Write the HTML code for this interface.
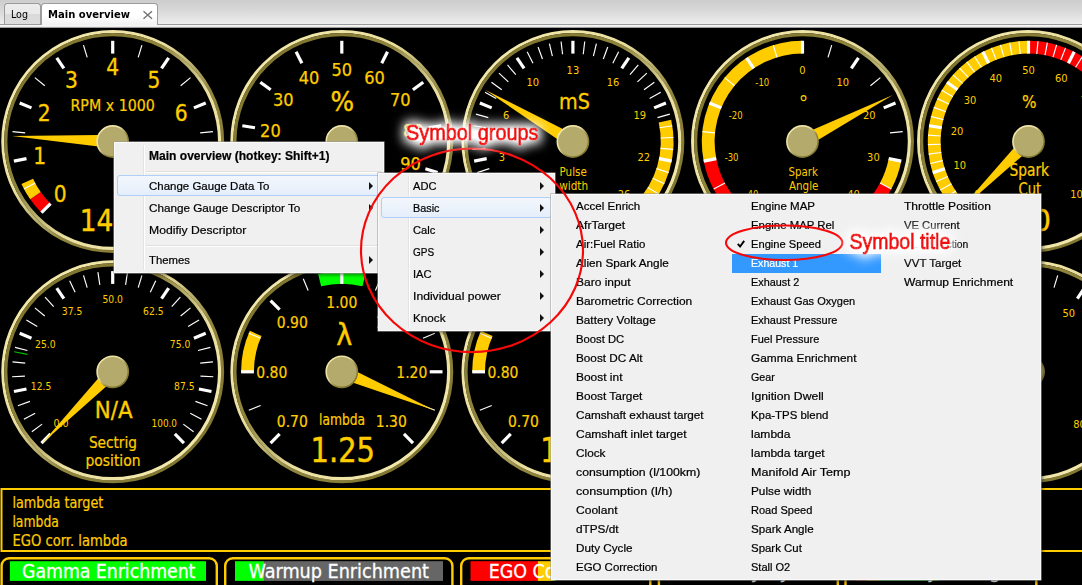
<!DOCTYPE html>
<html><head><meta charset="utf-8"><title>Main overview</title>
<style>
html,body{margin:0;padding:0;background:#000;}
body{width:1082px;height:585px;overflow:hidden;position:relative;font-family:"Liberation Sans",sans-serif;font-size:11.7px;color:#000;}
#tabbar{position:absolute;left:0;top:0;width:1082px;height:27.7px;background:linear-gradient(#cdcdcd 0,#d9d9d9 40%,#ededed 85%,#f4f4f4 100%);}
#tabline{position:absolute;left:0;top:23.6px;width:1082px;height:4.1px;background:linear-gradient(#9a9a9a 0,#9a9a9a 1px,#fbfbfb 1px,#dcdcdc 100%);}
.tab{position:absolute;box-sizing:border-box;border:1px solid #9c9c9c;border-bottom:none;border-radius:3.5px 3.5px 0 0;}
#tlog{left:4.2px;top:3.3px;width:36.6px;height:21.1px;background:linear-gradient(#ececec 0,#e9e9e9 50%,#dadada 50%,#dcdcdc 100%);}
#tmain{left:40.8px;top:3.1px;width:117.4px;height:21.7px;background:linear-gradient(#fff 0,#fff 55%,#f1f1f1 100%);font-weight:bold;}
.tab span{position:absolute;top:3.8px;font-size:11px;white-space:nowrap;transform-origin:0 50%;font-family:"DejaVu Sans Condensed","DejaVu Sans",sans-serif;font-stretch:condensed;}
.menu{position:absolute;box-sizing:border-box;background:#f0f0f0;border:1px solid #fafafa;box-shadow:0 0 0 0.55px #9a9a9a,2.5px 2.5px 3px rgba(0,0,0,.4);}
.gut{position:absolute;top:2px;bottom:2px;width:0;border-left:1px solid #e2e3e3;border-right:1px solid #fff;}
.mi{position:absolute;left:34.3px;height:22px;line-height:22px;white-space:nowrap;transform-origin:0 50%;}
.sep{position:absolute;left:31px;right:2px;height:0;border-top:1px solid #e0e0e0;border-bottom:1px solid #fff;}
.hl{position:absolute;left:2px;right:2px;height:21px;box-sizing:border-box;border:1px solid #aecff7;border-radius:3px;background:linear-gradient(#f3f7fc,#e4eefb);}
.arr{position:absolute;width:0;height:0;border-left:4.8px solid #111;border-top:4px solid transparent;border-bottom:4px solid transparent;margin-top:-0.3px;}
.mi,.mi3{-webkit-text-stroke:0.22px currentColor;}
.mi3{position:absolute;height:19px;line-height:19px;white-space:nowrap;transform-origin:0 50%;}
.hl3{color:#fff;}
</style></head><body>
<div id="tabbar"></div><div id="tabline"></div>
<div class="tab" id="tlog"><span class="t" style="left:6.3px;transform:scaleX(0.9628)">Log</span></div>
<div class="tab" id="tmain"><span class="t" style="left:6.4px;top:3.7px;transform:scaleX(1.0129)">Main overview</span>
<svg style="position:absolute;left:100px;top:5px" width="12" height="12" viewBox="0 0 12 12"><path d="M1.5,2.2 L10,9.8 M10,2.2 L1.5,9.8" stroke="#727272" stroke-width="1.4" fill="none"/></svg></div>
<svg width="1082" height="585" viewBox="0 0 1082 585" style="position:absolute;left:0;top:0;font-stretch:condensed" font-family='"DejaVu Sans Condensed","DejaVu Sans",sans-serif'>
<defs>
<linearGradient id="rgo" x1="0.15" y1="0.15" x2="0.85" y2="0.85"><stop offset="0" stop-color="#F2E8AA"/><stop offset="0.35" stop-color="#EADF9F"/><stop offset="0.5" stop-color="#BDB370"/><stop offset="0.65" stop-color="#8F853D"/><stop offset="1" stop-color="#80762F"/></linearGradient>
<linearGradient id="rgi" x1="0.15" y1="0.15" x2="0.85" y2="0.85"><stop offset="0" stop-color="#80762F"/><stop offset="0.35" stop-color="#8F853D"/><stop offset="0.5" stop-color="#BDB370"/><stop offset="0.65" stop-color="#EADF9F"/><stop offset="1" stop-color="#F2E8AA"/></linearGradient>
</defs>
<rect x="0" y="27.7" width="1082" height="585" fill="#000"/>
<circle cx="112.7" cy="141.5" r="109.95" fill="none" stroke="url(#rgo)" stroke-width="3.0"/>
<circle cx="112.7" cy="141.5" r="106.9" fill="none" stroke="url(#rgi)" stroke-width="3.2"/>
<path d="M41.49,212.71 A100.7,100.7 0 0 1 30.21,199.26 L40.70,191.92 A87.9,87.9 0 0 0 50.55,203.65 Z" fill="#FF0000"/>
<path d="M30.21,199.26 A100.7,100.7 0 0 1 21.43,184.06 L33.04,178.65 A87.9,87.9 0 0 0 40.70,191.92 Z" fill="#FFCC00"/>
<line x1="50.55" y1="203.65" x2="41.49" y2="212.71" stroke="#fff" stroke-width="3.2"/>
<line x1="35.18" y1="182.94" x2="23.89" y2="188.97" stroke="#fff" stroke-width="1.15"/>
<text x="60.2" y="202.3" font-size="22.5" text-anchor="middle" fill="#FFCC00" stroke="#FFCC00" stroke-width="0.32">0</text>
<line x1="26.49" y1="158.65" x2="13.93" y2="161.15" stroke="#fff" stroke-width="3.2"/>
<line x1="25.22" y1="132.88" x2="12.48" y2="131.63" stroke="#fff" stroke-width="1.15"/>
<text x="39.8" y="164.2" font-size="22.5" text-anchor="middle" fill="#FFCC00" stroke="#FFCC00" stroke-width="0.32">1</text>
<line x1="31.49" y1="107.86" x2="19.67" y2="102.96" stroke="#fff" stroke-width="3.2"/>
<line x1="44.75" y1="85.74" x2="34.86" y2="77.62" stroke="#fff" stroke-width="1.15"/>
<text x="44.1" y="121.3" font-size="22.5" text-anchor="middle" fill="#FFCC00" stroke="#FFCC00" stroke-width="0.32">2</text>
<line x1="63.87" y1="68.41" x2="56.75" y2="57.77" stroke="#fff" stroke-width="3.2"/>
<line x1="87.18" y1="57.38" x2="83.47" y2="45.14" stroke="#fff" stroke-width="1.15"/>
<text x="71.4" y="87.9" font-size="22.5" text-anchor="middle" fill="#FFCC00" stroke="#FFCC00" stroke-width="0.32">3</text>
<line x1="112.70" y1="53.60" x2="112.70" y2="40.80" stroke="#fff" stroke-width="3.2"/>
<line x1="138.22" y1="57.38" x2="141.93" y2="45.14" stroke="#fff" stroke-width="1.15"/>
<text x="112.7" y="75.4" font-size="22.5" text-anchor="middle" fill="#FFCC00" stroke="#FFCC00" stroke-width="0.32">4</text>
<line x1="161.53" y1="68.41" x2="168.65" y2="57.77" stroke="#fff" stroke-width="3.2"/>
<line x1="180.65" y1="85.74" x2="190.54" y2="77.62" stroke="#fff" stroke-width="1.15"/>
<text x="154.0" y="87.9" font-size="22.5" text-anchor="middle" fill="#FFCC00" stroke="#FFCC00" stroke-width="0.32">5</text>
<line x1="193.91" y1="107.86" x2="205.73" y2="102.96" stroke="#fff" stroke-width="3.2"/>
<line x1="200.18" y1="132.88" x2="212.92" y2="131.63" stroke="#fff" stroke-width="1.15"/>
<text x="181.3" y="121.3" font-size="22.5" text-anchor="middle" fill="#FFCC00" stroke="#FFCC00" stroke-width="0.32">6</text>
<line x1="198.91" y1="158.65" x2="211.47" y2="161.15" stroke="#fff" stroke-width="3.2"/>
<line x1="190.22" y1="182.94" x2="201.51" y2="188.97" stroke="#fff" stroke-width="1.15"/>
<text x="185.6" y="164.2" font-size="22.5" text-anchor="middle" fill="#FFCC00" stroke="#FFCC00" stroke-width="0.32">7</text>
<line x1="174.85" y1="203.65" x2="183.91" y2="212.71" stroke="#fff" stroke-width="3.2"/>
<text x="165.2" y="202.3" font-size="22.5" text-anchor="middle" fill="#FFCC00" stroke="#FFCC00" stroke-width="0.32">8</text>
<text x="112.7" y="111.2" font-size="16.6" text-anchor="middle" fill="#FFCC00" stroke="#FFCC00" stroke-width="0.23" textLength="84.5" lengthAdjust="spacingAndGlyphs">RPM x 1000</text>
<text x="113.3" y="231.1" font-size="30.3" text-anchor="middle" fill="#FFCC00" stroke="#FFCC00" stroke-width="0.42" textLength="67" lengthAdjust="spacingAndGlyphs">1425</text>
<polygon points="99.03,134.95 12.05,136.05 98.41,146.53" fill="#FFCC00"/>
<circle cx="112.7" cy="141.5" r="15.6" fill="#B3AA6B" stroke="url(#rgo)" stroke-width="1.6"/>
<circle cx="341.8" cy="141.5" r="109.95" fill="none" stroke="url(#rgo)" stroke-width="3.0"/>
<circle cx="341.8" cy="141.5" r="106.9" fill="none" stroke="url(#rgi)" stroke-width="3.2"/>
<line x1="279.65" y1="203.65" x2="270.59" y2="212.71" stroke="#fff" stroke-width="3.2"/>
<text x="290.7" y="199.2" font-size="18" text-anchor="middle" fill="#FFCC00" stroke="#FFCC00" stroke-width="0.25">0</text>
<line x1="258.20" y1="168.66" x2="246.03" y2="172.62" stroke="#fff" stroke-width="3.2"/>
<text x="273.0" y="170.4" font-size="18" text-anchor="middle" fill="#FFCC00" stroke="#FFCC00" stroke-width="0.25">10</text>
<line x1="254.98" y1="127.75" x2="242.34" y2="125.75" stroke="#fff" stroke-width="3.2"/>
<text x="270.4" y="136.8" font-size="18" text-anchor="middle" fill="#FFCC00" stroke="#FFCC00" stroke-width="0.25">20</text>
<line x1="270.69" y1="89.83" x2="260.33" y2="82.31" stroke="#fff" stroke-width="3.2"/>
<text x="283.3" y="105.6" font-size="18" text-anchor="middle" fill="#FFCC00" stroke="#FFCC00" stroke-width="0.25">30</text>
<line x1="301.89" y1="63.18" x2="296.08" y2="51.78" stroke="#fff" stroke-width="3.2"/>
<text x="309.0" y="83.7" font-size="18" text-anchor="middle" fill="#FFCC00" stroke="#FFCC00" stroke-width="0.25">40</text>
<line x1="341.80" y1="53.60" x2="341.80" y2="40.80" stroke="#fff" stroke-width="3.2"/>
<text x="341.8" y="75.8" font-size="18" text-anchor="middle" fill="#FFCC00" stroke="#FFCC00" stroke-width="0.25">50</text>
<line x1="381.71" y1="63.18" x2="387.52" y2="51.78" stroke="#fff" stroke-width="3.2"/>
<text x="374.6" y="83.7" font-size="18" text-anchor="middle" fill="#FFCC00" stroke="#FFCC00" stroke-width="0.25">60</text>
<line x1="412.91" y1="89.83" x2="423.27" y2="82.31" stroke="#fff" stroke-width="3.2"/>
<text x="400.3" y="105.6" font-size="18" text-anchor="middle" fill="#FFCC00" stroke="#FFCC00" stroke-width="0.25">70</text>
<line x1="428.62" y1="127.75" x2="441.26" y2="125.75" stroke="#fff" stroke-width="3.2"/>
<text x="413.2" y="136.8" font-size="18" text-anchor="middle" fill="#FFCC00" stroke="#FFCC00" stroke-width="0.25">80</text>
<line x1="425.40" y1="168.66" x2="437.57" y2="172.62" stroke="#fff" stroke-width="3.2"/>
<text x="410.6" y="170.4" font-size="18" text-anchor="middle" fill="#FFCC00" stroke="#FFCC00" stroke-width="0.25">90</text>
<line x1="403.95" y1="203.65" x2="413.01" y2="212.71" stroke="#fff" stroke-width="3.2"/>
<text x="392.9" y="199.2" font-size="18" text-anchor="middle" fill="#FFCC00" stroke="#FFCC00" stroke-width="0.25">100</text>
<text x="342.3" y="110.7" font-size="26.5" text-anchor="middle" fill="#FFCC00" stroke="#FFCC00" stroke-width="0.37" textLength="23.6" lengthAdjust="spacingAndGlyphs">%</text>
<circle cx="341.8" cy="141.5" r="15.6" fill="#B3AA6B" stroke="url(#rgo)" stroke-width="1.6"/>
<circle cx="572.9" cy="141.5" r="109.95" fill="none" stroke="url(#rgo)" stroke-width="3.0"/>
<circle cx="572.9" cy="141.5" r="106.9" fill="none" stroke="url(#rgi)" stroke-width="3.2"/>
<path d="M671.21,119.70 A100.7,100.7 0 0 1 644.11,212.71 L635.05,203.65 A87.9,87.9 0 0 0 658.72,122.47 Z" fill="#FFCC00"/>
<line x1="510.75" y1="203.65" x2="501.69" y2="212.71" stroke="#fff" stroke-width="3.2"/>
<line x1="503.87" y1="195.92" x2="493.82" y2="203.84" stroke="#fff" stroke-width="1.15"/>
<line x1="497.95" y1="187.43" x2="487.04" y2="194.12" stroke="#fff" stroke-width="1.15"/>
<line x1="493.07" y1="178.30" x2="481.45" y2="183.66" stroke="#fff" stroke-width="1.15"/>
<line x1="489.30" y1="168.66" x2="477.13" y2="172.62" stroke="#fff" stroke-width="1.15"/>
<text x="521.8" y="197.5" font-size="11" text-anchor="middle" fill="#FFCC00" stroke="#FFCC00" stroke-width="0.00">0</text>
<line x1="486.69" y1="158.65" x2="474.13" y2="161.15" stroke="#fff" stroke-width="3.2"/>
<line x1="485.27" y1="148.40" x2="472.51" y2="149.40" stroke="#fff" stroke-width="1.15"/>
<line x1="485.07" y1="138.05" x2="472.28" y2="137.55" stroke="#fff" stroke-width="1.15"/>
<line x1="486.08" y1="127.75" x2="473.44" y2="125.75" stroke="#fff" stroke-width="1.15"/>
<line x1="488.30" y1="117.64" x2="475.98" y2="114.17" stroke="#fff" stroke-width="1.15"/>
<text x="502.0" y="160.5" font-size="11" text-anchor="middle" fill="#FFCC00" stroke="#FFCC00" stroke-width="0.00">3</text>
<line x1="491.69" y1="107.86" x2="479.87" y2="102.96" stroke="#fff" stroke-width="3.2"/>
<line x1="496.21" y1="98.55" x2="485.04" y2="92.30" stroke="#fff" stroke-width="1.15"/>
<line x1="501.79" y1="89.83" x2="491.43" y2="82.31" stroke="#fff" stroke-width="1.15"/>
<line x1="508.35" y1="81.83" x2="498.95" y2="73.14" stroke="#fff" stroke-width="1.15"/>
<line x1="515.81" y1="74.66" x2="507.50" y2="64.93" stroke="#fff" stroke-width="1.15"/>
<text x="506.1" y="118.7" font-size="11" text-anchor="middle" fill="#FFCC00" stroke="#FFCC00" stroke-width="0.00">6</text>
<line x1="524.07" y1="68.41" x2="516.95" y2="57.77" stroke="#fff" stroke-width="3.2"/>
<line x1="532.99" y1="63.18" x2="527.18" y2="51.78" stroke="#fff" stroke-width="1.15"/>
<line x1="542.48" y1="59.03" x2="538.05" y2="47.02" stroke="#fff" stroke-width="1.15"/>
<line x1="552.38" y1="56.03" x2="549.39" y2="43.58" stroke="#fff" stroke-width="1.15"/>
<line x1="562.57" y1="54.21" x2="561.06" y2="41.50" stroke="#fff" stroke-width="1.15"/>
<text x="532.7" y="86.3" font-size="11" text-anchor="middle" fill="#FFCC00" stroke="#FFCC00" stroke-width="0.00">10</text>
<line x1="572.90" y1="53.60" x2="572.90" y2="40.80" stroke="#fff" stroke-width="3.2"/>
<line x1="583.23" y1="54.21" x2="584.74" y2="41.50" stroke="#fff" stroke-width="1.15"/>
<line x1="593.42" y1="56.03" x2="596.41" y2="43.58" stroke="#fff" stroke-width="1.15"/>
<line x1="603.32" y1="59.03" x2="607.75" y2="47.02" stroke="#fff" stroke-width="1.15"/>
<line x1="612.81" y1="63.18" x2="618.62" y2="51.78" stroke="#fff" stroke-width="1.15"/>
<text x="572.9" y="74.1" font-size="11" text-anchor="middle" fill="#FFCC00" stroke="#FFCC00" stroke-width="0.00">13</text>
<line x1="621.73" y1="68.41" x2="628.85" y2="57.77" stroke="#fff" stroke-width="3.2"/>
<line x1="629.99" y1="74.66" x2="638.30" y2="64.93" stroke="#fff" stroke-width="1.15"/>
<line x1="637.45" y1="81.83" x2="646.85" y2="73.14" stroke="#fff" stroke-width="1.15"/>
<line x1="644.01" y1="89.83" x2="654.37" y2="82.31" stroke="#fff" stroke-width="1.15"/>
<line x1="649.59" y1="98.55" x2="660.76" y2="92.30" stroke="#fff" stroke-width="1.15"/>
<text x="613.1" y="86.3" font-size="11" text-anchor="middle" fill="#FFCC00" stroke="#FFCC00" stroke-width="0.00">16</text>
<line x1="654.11" y1="107.86" x2="665.93" y2="102.96" stroke="#fff" stroke-width="3.2"/>
<line x1="657.50" y1="117.64" x2="669.82" y2="114.17" stroke="#fff" stroke-width="1.15"/>
<line x1="659.72" y1="127.75" x2="672.36" y2="125.75" stroke="#fff" stroke-width="1.15"/>
<line x1="660.73" y1="138.05" x2="673.52" y2="137.55" stroke="#fff" stroke-width="1.15"/>
<line x1="660.53" y1="148.40" x2="673.29" y2="149.40" stroke="#fff" stroke-width="1.15"/>
<text x="639.7" y="118.7" font-size="11" text-anchor="middle" fill="#FFCC00" stroke="#FFCC00" stroke-width="0.00">19</text>
<line x1="659.11" y1="158.65" x2="671.67" y2="161.15" stroke="#fff" stroke-width="3.2"/>
<line x1="656.50" y1="168.66" x2="668.67" y2="172.62" stroke="#fff" stroke-width="1.15"/>
<line x1="652.73" y1="178.30" x2="664.35" y2="183.66" stroke="#fff" stroke-width="1.15"/>
<line x1="647.85" y1="187.43" x2="658.76" y2="194.12" stroke="#fff" stroke-width="1.15"/>
<line x1="641.93" y1="195.92" x2="651.98" y2="203.84" stroke="#fff" stroke-width="1.15"/>
<text x="643.8" y="160.5" font-size="11" text-anchor="middle" fill="#FFCC00" stroke="#FFCC00" stroke-width="0.00">22</text>
<line x1="635.05" y1="203.65" x2="644.11" y2="212.71" stroke="#fff" stroke-width="3.2"/>
<text x="624.0" y="197.5" font-size="11" text-anchor="middle" fill="#FFCC00" stroke="#FFCC00" stroke-width="0.00">26</text>
<text x="574.4" y="108.8" font-size="21.3" text-anchor="middle" fill="#FFCC00" stroke="#FFCC00" stroke-width="0.30">mS</text>
<text x="573.2" y="176.2" font-size="12.8" text-anchor="middle" fill="#FFCC00" stroke="#FFCC00" stroke-width="0.00" textLength="27.3" lengthAdjust="spacingAndGlyphs">Pulse</text>
<text x="573.7" y="190.2" font-size="12.8" text-anchor="middle" fill="#FFCC00" stroke="#FFCC00" stroke-width="0.00" textLength="28.8" lengthAdjust="spacingAndGlyphs">width</text>
<polygon points="563.78,129.40 485.01,89.73 557.89,139.39" fill="#FFCC00"/>
<circle cx="572.9" cy="141.5" r="15.6" fill="#B3AA6B" stroke="url(#rgo)" stroke-width="1.6"/>
<circle cx="802.5" cy="141.5" r="109.95" fill="none" stroke="url(#rgo)" stroke-width="3.0"/>
<circle cx="802.5" cy="141.5" r="106.9" fill="none" stroke="url(#rgi)" stroke-width="3.2"/>
<path d="M731.29,212.71 A100.7,100.7 0 0 1 703.73,161.15 L716.29,158.65 A87.9,87.9 0 0 0 740.35,203.65 Z" fill="#FF0000"/>
<path d="M703.73,161.15 A100.7,100.7 0 0 1 802.50,40.80 L802.50,53.60 A87.9,87.9 0 0 0 716.29,158.65 Z" fill="#FFCC00"/>
<path d="M901.27,161.15 A100.7,100.7 0 0 1 891.33,188.93 L880.04,182.90 A87.9,87.9 0 0 0 888.71,158.65 Z" fill="#FFCC00"/>
<path d="M891.33,188.93 A100.7,100.7 0 0 1 873.71,212.71 L864.65,203.65 A87.9,87.9 0 0 0 880.04,182.90 Z" fill="#FF0000"/>
<line x1="740.35" y1="203.65" x2="731.29" y2="212.71" stroke="#fff" stroke-width="3.2"/>
<line x1="724.98" y1="182.94" x2="713.69" y2="188.97" stroke="#fff" stroke-width="1.15"/>
<text x="751.4" y="197.5" font-size="11" text-anchor="middle" fill="#FFCC00" stroke="#FFCC00" stroke-width="0.00" textLength="13.9" lengthAdjust="spacingAndGlyphs">-40</text>
<line x1="716.29" y1="158.65" x2="703.73" y2="161.15" stroke="#fff" stroke-width="3.2"/>
<line x1="715.02" y1="132.88" x2="702.28" y2="131.63" stroke="#fff" stroke-width="1.15"/>
<text x="731.6" y="160.5" font-size="11" text-anchor="middle" fill="#FFCC00" stroke="#FFCC00" stroke-width="0.00" textLength="13.9" lengthAdjust="spacingAndGlyphs">-30</text>
<line x1="721.29" y1="107.86" x2="709.47" y2="102.96" stroke="#fff" stroke-width="3.2"/>
<line x1="734.55" y1="85.74" x2="724.66" y2="77.62" stroke="#fff" stroke-width="1.15"/>
<text x="735.7" y="118.7" font-size="11" text-anchor="middle" fill="#FFCC00" stroke="#FFCC00" stroke-width="0.00" textLength="13.9" lengthAdjust="spacingAndGlyphs">-20</text>
<line x1="753.67" y1="68.41" x2="746.55" y2="57.77" stroke="#fff" stroke-width="3.2"/>
<line x1="776.98" y1="57.38" x2="773.27" y2="45.14" stroke="#fff" stroke-width="1.15"/>
<text x="762.3" y="86.3" font-size="11" text-anchor="middle" fill="#FFCC00" stroke="#FFCC00" stroke-width="0.00" textLength="13.9" lengthAdjust="spacingAndGlyphs">-10</text>
<line x1="802.50" y1="53.60" x2="802.50" y2="40.80" stroke="#fff" stroke-width="3.2"/>
<line x1="828.02" y1="57.38" x2="831.73" y2="45.14" stroke="#fff" stroke-width="1.15"/>
<text x="802.5" y="74.1" font-size="11" text-anchor="middle" fill="#FFCC00" stroke="#FFCC00" stroke-width="0.00">0</text>
<line x1="851.33" y1="68.41" x2="858.45" y2="57.77" stroke="#fff" stroke-width="3.2"/>
<line x1="870.45" y1="85.74" x2="880.34" y2="77.62" stroke="#fff" stroke-width="1.15"/>
<text x="842.7" y="86.3" font-size="11" text-anchor="middle" fill="#FFCC00" stroke="#FFCC00" stroke-width="0.00">10</text>
<line x1="883.71" y1="107.86" x2="895.53" y2="102.96" stroke="#fff" stroke-width="3.2"/>
<line x1="889.98" y1="132.88" x2="902.72" y2="131.63" stroke="#fff" stroke-width="1.15"/>
<text x="869.3" y="118.7" font-size="11" text-anchor="middle" fill="#FFCC00" stroke="#FFCC00" stroke-width="0.00">20</text>
<line x1="888.71" y1="158.65" x2="901.27" y2="161.15" stroke="#fff" stroke-width="3.2"/>
<line x1="880.02" y1="182.94" x2="891.31" y2="188.97" stroke="#fff" stroke-width="1.15"/>
<text x="873.4" y="160.5" font-size="11" text-anchor="middle" fill="#FFCC00" stroke="#FFCC00" stroke-width="0.00">30</text>
<line x1="864.65" y1="203.65" x2="873.71" y2="212.71" stroke="#fff" stroke-width="3.2"/>
<text x="853.6" y="197.5" font-size="11" text-anchor="middle" fill="#FFCC00" stroke="#FFCC00" stroke-width="0.00">40</text>
<text x="803.5" y="110.5" font-size="21" text-anchor="middle" fill="#FFCC00" stroke="#FFCC00" stroke-width="0">°</text>
<text x="803.3" y="176.4" font-size="12.8" text-anchor="middle" fill="#FFCC00" stroke="#FFCC00" stroke-width="0.00" textLength="29.4" lengthAdjust="spacingAndGlyphs">Spark</text>
<text x="803.7" y="190.4" font-size="12.8" text-anchor="middle" fill="#FFCC00" stroke="#FFCC00" stroke-width="0.00" textLength="29.4" lengthAdjust="spacingAndGlyphs">Angle</text>
<polygon points="817.60,140.26 892.86,95.06 812.30,129.94" fill="#FFCC00"/>
<circle cx="802.5" cy="141.5" r="15.6" fill="#B3AA6B" stroke="url(#rgo)" stroke-width="1.6"/>
<circle cx="1028.5" cy="141.5" r="109.95" fill="none" stroke="url(#rgo)" stroke-width="3.0"/>
<circle cx="1028.5" cy="141.5" r="106.9" fill="none" stroke="url(#rgi)" stroke-width="3.2"/>
<path d="M957.29,212.71 A100.7,100.7 0 0 1 1028.50,40.80 L1028.50,53.60 A87.9,87.9 0 0 0 966.35,203.65 Z" fill="#FFCC00"/>
<path d="M1028.50,40.80 A100.7,100.7 0 0 1 1099.71,212.71 L1090.65,203.65 A87.9,87.9 0 0 0 1028.50,53.60 Z" fill="#FF0000"/>
<line x1="966.35" y1="203.65" x2="957.29" y2="212.71" stroke="#fff" stroke-width="3.2"/>
<line x1="960.77" y1="197.53" x2="950.91" y2="205.69" stroke="#fff" stroke-width="1.15"/>
<line x1="955.80" y1="190.91" x2="945.21" y2="198.10" stroke="#fff" stroke-width="1.15"/>
<line x1="951.47" y1="183.85" x2="940.26" y2="190.01" stroke="#fff" stroke-width="1.15"/>
<line x1="947.83" y1="176.41" x2="936.08" y2="181.49" stroke="#fff" stroke-width="1.15"/>
<text x="977.4" y="197.5" font-size="11" text-anchor="middle" fill="#FFCC00" stroke="#FFCC00" stroke-width="0.00">0</text>
<line x1="944.90" y1="168.66" x2="932.73" y2="172.62" stroke="#fff" stroke-width="3.2"/>
<line x1="942.72" y1="160.67" x2="930.23" y2="163.47" stroke="#fff" stroke-width="1.15"/>
<line x1="941.29" y1="152.52" x2="928.59" y2="154.12" stroke="#fff" stroke-width="1.15"/>
<line x1="940.64" y1="144.26" x2="927.85" y2="144.66" stroke="#fff" stroke-width="1.15"/>
<line x1="940.77" y1="135.98" x2="928.00" y2="135.18" stroke="#fff" stroke-width="1.15"/>
<text x="959.7" y="168.8" font-size="11" text-anchor="middle" fill="#FFCC00" stroke="#FFCC00" stroke-width="0.00">10</text>
<line x1="941.68" y1="127.75" x2="929.04" y2="125.75" stroke="#fff" stroke-width="3.2"/>
<line x1="943.36" y1="119.64" x2="930.96" y2="116.46" stroke="#fff" stroke-width="1.15"/>
<line x1="945.80" y1="111.72" x2="933.75" y2="107.39" stroke="#fff" stroke-width="1.15"/>
<line x1="948.97" y1="104.07" x2="937.38" y2="98.62" stroke="#fff" stroke-width="1.15"/>
<line x1="952.84" y1="96.76" x2="941.82" y2="90.24" stroke="#fff" stroke-width="1.15"/>
<text x="957.1" y="135.1" font-size="11" text-anchor="middle" fill="#FFCC00" stroke="#FFCC00" stroke-width="0.00">20</text>
<line x1="957.39" y1="89.83" x2="947.03" y2="82.31" stroke="#fff" stroke-width="3.2"/>
<line x1="962.57" y1="83.37" x2="952.96" y2="74.91" stroke="#fff" stroke-width="1.15"/>
<line x1="968.33" y1="77.42" x2="959.57" y2="68.09" stroke="#fff" stroke-width="1.15"/>
<line x1="974.63" y1="72.05" x2="966.78" y2="61.93" stroke="#fff" stroke-width="1.15"/>
<line x1="981.40" y1="67.28" x2="974.54" y2="56.48" stroke="#fff" stroke-width="1.15"/>
<text x="970.0" y="103.9" font-size="11" text-anchor="middle" fill="#FFCC00" stroke="#FFCC00" stroke-width="0.00">30</text>
<line x1="988.59" y1="63.18" x2="982.78" y2="51.78" stroke="#fff" stroke-width="3.2"/>
<line x1="996.14" y1="59.77" x2="991.43" y2="47.87" stroke="#fff" stroke-width="1.15"/>
<line x1="1003.98" y1="57.09" x2="1000.41" y2="44.80" stroke="#fff" stroke-width="1.15"/>
<line x1="1012.03" y1="55.16" x2="1009.63" y2="42.58" stroke="#fff" stroke-width="1.15"/>
<line x1="1020.23" y1="53.99" x2="1019.02" y2="41.25" stroke="#fff" stroke-width="1.15"/>
<text x="995.7" y="82.0" font-size="11" text-anchor="middle" fill="#FFCC00" stroke="#FFCC00" stroke-width="0.00">40</text>
<line x1="1028.50" y1="53.60" x2="1028.50" y2="40.80" stroke="#fff" stroke-width="3.2"/>
<line x1="1036.77" y1="53.99" x2="1037.98" y2="41.25" stroke="#fff" stroke-width="1.15"/>
<line x1="1044.97" y1="55.16" x2="1047.37" y2="42.58" stroke="#fff" stroke-width="1.15"/>
<line x1="1053.02" y1="57.09" x2="1056.59" y2="44.80" stroke="#fff" stroke-width="1.15"/>
<line x1="1060.86" y1="59.77" x2="1065.57" y2="47.87" stroke="#fff" stroke-width="1.15"/>
<text x="1028.5" y="74.1" font-size="11" text-anchor="middle" fill="#FFCC00" stroke="#FFCC00" stroke-width="0.00">50</text>
<line x1="1068.41" y1="63.18" x2="1074.22" y2="51.78" stroke="#fff" stroke-width="3.2"/>
<line x1="1075.60" y1="67.28" x2="1082.46" y2="56.48" stroke="#fff" stroke-width="1.15"/>
<line x1="1082.37" y1="72.05" x2="1090.22" y2="61.93" stroke="#fff" stroke-width="1.15"/>
<line x1="1088.67" y1="77.42" x2="1097.43" y2="68.09" stroke="#fff" stroke-width="1.15"/>
<line x1="1094.43" y1="83.37" x2="1104.04" y2="74.91" stroke="#fff" stroke-width="1.15"/>
<text x="1061.3" y="82.0" font-size="11" text-anchor="middle" fill="#FFCC00" stroke="#FFCC00" stroke-width="0.00">60</text>
<line x1="1099.61" y1="89.83" x2="1109.97" y2="82.31" stroke="#fff" stroke-width="3.2"/>
<line x1="1104.16" y1="96.76" x2="1115.18" y2="90.24" stroke="#fff" stroke-width="1.15"/>
<line x1="1108.03" y1="104.07" x2="1119.62" y2="98.62" stroke="#fff" stroke-width="1.15"/>
<line x1="1111.20" y1="111.72" x2="1123.25" y2="107.39" stroke="#fff" stroke-width="1.15"/>
<line x1="1113.64" y1="119.64" x2="1126.04" y2="116.46" stroke="#fff" stroke-width="1.15"/>
<text x="1087.0" y="103.9" font-size="11" text-anchor="middle" fill="#FFCC00" stroke="#FFCC00" stroke-width="0.00">70</text>
<line x1="1115.32" y1="127.75" x2="1127.96" y2="125.75" stroke="#fff" stroke-width="3.2"/>
<line x1="1116.23" y1="135.98" x2="1129.00" y2="135.18" stroke="#fff" stroke-width="1.15"/>
<line x1="1116.36" y1="144.26" x2="1129.15" y2="144.66" stroke="#fff" stroke-width="1.15"/>
<line x1="1115.71" y1="152.52" x2="1128.41" y2="154.12" stroke="#fff" stroke-width="1.15"/>
<line x1="1114.28" y1="160.67" x2="1126.77" y2="163.47" stroke="#fff" stroke-width="1.15"/>
<text x="1099.9" y="135.1" font-size="11" text-anchor="middle" fill="#FFCC00" stroke="#FFCC00" stroke-width="0.00">80</text>
<line x1="1112.10" y1="168.66" x2="1124.27" y2="172.62" stroke="#fff" stroke-width="3.2"/>
<line x1="1109.17" y1="176.41" x2="1120.92" y2="181.49" stroke="#fff" stroke-width="1.15"/>
<line x1="1105.53" y1="183.85" x2="1116.74" y2="190.01" stroke="#fff" stroke-width="1.15"/>
<line x1="1101.20" y1="190.91" x2="1111.79" y2="198.10" stroke="#fff" stroke-width="1.15"/>
<line x1="1096.23" y1="197.53" x2="1106.09" y2="205.69" stroke="#fff" stroke-width="1.15"/>
<text x="1097.3" y="168.8" font-size="11" text-anchor="middle" fill="#FFCC00" stroke="#FFCC00" stroke-width="0.00">90</text>
<line x1="1090.65" y1="203.65" x2="1099.71" y2="212.71" stroke="#fff" stroke-width="3.2"/>
<text x="1079.6" y="197.5" font-size="11" text-anchor="middle" fill="#FFCC00" stroke="#FFCC00" stroke-width="0.00">100</text>
<text x="1029.3" y="107.9" font-size="17" text-anchor="middle" fill="#FFCC00" stroke="#FFCC00" stroke-width="0.24">%</text>
<text x="1029.3" y="175.7" font-size="17.2" text-anchor="middle" fill="#FFCC00" stroke="#FFCC00" stroke-width="0.24" textLength="39.6" lengthAdjust="spacingAndGlyphs">Spark</text>
<text x="1029.8" y="194.5" font-size="17.2" text-anchor="middle" fill="#FFCC00" stroke="#FFCC00" stroke-width="0.24" textLength="22.6" lengthAdjust="spacingAndGlyphs">Cut</text>
<text x="1028.9" y="231.1" font-size="30.3" text-anchor="middle" fill="#FFCC00" stroke="#FFCC00" stroke-width="0.42" textLength="44" lengthAdjust="spacingAndGlyphs">0.0</text>
<polygon points="1014.50,147.30 957.22,212.78 1022.70,155.50" fill="#FFCC00"/>
<circle cx="1028.5" cy="141.5" r="15.6" fill="#B3AA6B" stroke="url(#rgo)" stroke-width="1.6"/>
<circle cx="112.7" cy="371.8" r="109.95" fill="none" stroke="url(#rgo)" stroke-width="3.0"/>
<circle cx="112.7" cy="371.8" r="106.9" fill="none" stroke="url(#rgi)" stroke-width="3.2"/>
<line x1="50.55" y1="433.95" x2="41.49" y2="443.01" stroke="#fff" stroke-width="3.2"/>
<line x1="42.10" y1="424.16" x2="31.82" y2="431.79" stroke="#fff" stroke-width="1.15"/>
<line x1="35.18" y1="413.24" x2="23.89" y2="419.27" stroke="#fff" stroke-width="1.15"/>
<line x1="29.94" y1="401.41" x2="17.89" y2="405.72" stroke="#fff" stroke-width="1.15"/>
<text x="61.1" y="427.3" font-size="10.7" text-anchor="middle" fill="#FFCC00" stroke="#FFCC00" stroke-width="0.00">0.0</text>
<line x1="26.49" y1="388.95" x2="13.93" y2="391.45" stroke="#fff" stroke-width="3.2"/>
<line x1="24.91" y1="376.11" x2="12.12" y2="376.74" stroke="#fff" stroke-width="1.15"/>
<line x1="25.22" y1="363.18" x2="12.48" y2="361.93" stroke="#fff" stroke-width="1.15"/>
<line x1="27.43" y1="350.44" x2="15.02" y2="347.33" stroke="#fff" stroke-width="1.15"/>
<text x="41.1" y="389.9" font-size="10.7" text-anchor="middle" fill="#FFCC00" stroke="#FFCC00" stroke-width="0.00" textLength="20.5" lengthAdjust="spacingAndGlyphs">12.5</text>
<line x1="31.49" y1="338.16" x2="19.67" y2="333.26" stroke="#fff" stroke-width="3.2"/>
<line x1="37.31" y1="326.61" x2="26.33" y2="320.03" stroke="#fff" stroke-width="1.15"/>
<line x1="44.75" y1="316.04" x2="34.86" y2="307.92" stroke="#fff" stroke-width="1.15"/>
<line x1="53.67" y1="306.67" x2="45.07" y2="297.19" stroke="#fff" stroke-width="1.15"/>
<text x="45.3" y="347.8" font-size="10.7" text-anchor="middle" fill="#FFCC00" stroke="#FFCC00" stroke-width="0.00" textLength="20.5" lengthAdjust="spacingAndGlyphs">25.0</text>
<line x1="63.87" y1="298.71" x2="56.75" y2="288.07" stroke="#fff" stroke-width="3.2"/>
<line x1="75.12" y1="292.34" x2="69.65" y2="280.77" stroke="#fff" stroke-width="1.15"/>
<line x1="87.18" y1="287.68" x2="83.47" y2="275.44" stroke="#fff" stroke-width="1.15"/>
<line x1="99.80" y1="284.85" x2="97.92" y2="272.19" stroke="#fff" stroke-width="1.15"/>
<text x="72.1" y="315.0" font-size="10.7" text-anchor="middle" fill="#FFCC00" stroke="#FFCC00" stroke-width="0.00" textLength="20.5" lengthAdjust="spacingAndGlyphs">37.5</text>
<line x1="112.70" y1="283.90" x2="112.70" y2="271.10" stroke="#fff" stroke-width="3.2"/>
<line x1="125.60" y1="284.85" x2="127.48" y2="272.19" stroke="#fff" stroke-width="1.15"/>
<line x1="138.22" y1="287.68" x2="141.93" y2="275.44" stroke="#fff" stroke-width="1.15"/>
<line x1="150.28" y1="292.34" x2="155.75" y2="280.77" stroke="#fff" stroke-width="1.15"/>
<text x="112.7" y="302.7" font-size="10.7" text-anchor="middle" fill="#FFCC00" stroke="#FFCC00" stroke-width="0.00" textLength="20.5" lengthAdjust="spacingAndGlyphs">50.0</text>
<line x1="161.53" y1="298.71" x2="168.65" y2="288.07" stroke="#fff" stroke-width="3.2"/>
<line x1="171.73" y1="306.67" x2="180.33" y2="297.19" stroke="#fff" stroke-width="1.15"/>
<line x1="180.65" y1="316.04" x2="190.54" y2="307.92" stroke="#fff" stroke-width="1.15"/>
<line x1="188.09" y1="326.61" x2="199.07" y2="320.03" stroke="#fff" stroke-width="1.15"/>
<text x="153.3" y="315.0" font-size="10.7" text-anchor="middle" fill="#FFCC00" stroke="#FFCC00" stroke-width="0.00" textLength="20.5" lengthAdjust="spacingAndGlyphs">62.5</text>
<line x1="193.91" y1="338.16" x2="205.73" y2="333.26" stroke="#fff" stroke-width="3.2"/>
<line x1="197.97" y1="350.44" x2="210.38" y2="347.33" stroke="#fff" stroke-width="1.15"/>
<line x1="200.18" y1="363.18" x2="212.92" y2="361.93" stroke="#fff" stroke-width="1.15"/>
<line x1="200.49" y1="376.11" x2="213.28" y2="376.74" stroke="#fff" stroke-width="1.15"/>
<text x="180.1" y="347.8" font-size="10.7" text-anchor="middle" fill="#FFCC00" stroke="#FFCC00" stroke-width="0.00" textLength="20.5" lengthAdjust="spacingAndGlyphs">75.0</text>
<line x1="198.91" y1="388.95" x2="211.47" y2="391.45" stroke="#fff" stroke-width="3.2"/>
<line x1="195.46" y1="401.41" x2="207.51" y2="405.72" stroke="#fff" stroke-width="1.15"/>
<line x1="190.22" y1="413.24" x2="201.51" y2="419.27" stroke="#fff" stroke-width="1.15"/>
<line x1="183.30" y1="424.16" x2="193.58" y2="431.79" stroke="#fff" stroke-width="1.15"/>
<text x="184.3" y="389.9" font-size="10.7" text-anchor="middle" fill="#FFCC00" stroke="#FFCC00" stroke-width="0.00" textLength="20.5" lengthAdjust="spacingAndGlyphs">87.5</text>
<line x1="174.85" y1="433.95" x2="183.91" y2="443.01" stroke="#fff" stroke-width="3.2"/>
<text x="164.3" y="427.3" font-size="10.7" text-anchor="middle" fill="#FFCC00" stroke="#FFCC00" stroke-width="0.00" textLength="25.5" lengthAdjust="spacingAndGlyphs">100.0</text>
<text x="113.7" y="418.2" font-size="23.5" text-anchor="middle" fill="#FFCC00" stroke="#FFCC00" stroke-width="0.33" textLength="37.8" lengthAdjust="spacingAndGlyphs">N/A</text>
<text x="112.9" y="448.4" font-size="16" text-anchor="middle" fill="#FFCC00" stroke="#FFCC00" stroke-width="0.22" textLength="48" lengthAdjust="spacingAndGlyphs">Sectrig</text>
<text x="113.0" y="466.2" font-size="16" text-anchor="middle" fill="#FFCC00" stroke="#FFCC00" stroke-width="0.22" textLength="55" lengthAdjust="spacingAndGlyphs">position</text>
<polygon points="98.74,377.70 41.92,443.57 107.00,385.84" fill="#FFCC00"/>
<circle cx="112.7" cy="371.8" r="15.6" fill="#B3AA6B" stroke="url(#rgo)" stroke-width="1.6"/><line x1="27.45" y1="354.45" x2="14.22" y2="351.76" stroke="#00C000" stroke-width="1.2"/>
<circle cx="341.8" cy="371.8" r="109.95" fill="none" stroke="url(#rgo)" stroke-width="3.0"/>
<circle cx="341.8" cy="371.8" r="106.9" fill="none" stroke="url(#rgi)" stroke-width="3.2"/>
<path d="M241.10,371.80 A100.7,100.7 0 0 1 249.81,330.84 L261.50,336.05 A87.9,87.9 0 0 0 253.90,371.80 Z" fill="#FFCC00"/>
<path d="M318.12,273.92 A100.7,100.7 0 0 1 365.48,273.92 L362.47,286.36 A87.9,87.9 0 0 0 321.13,286.36 Z" fill="#00FF00"/>
<line x1="279.65" y1="433.95" x2="270.59" y2="443.01" stroke="#fff" stroke-width="3.2"/>
<line x1="260.59" y1="405.44" x2="248.77" y2="410.34" stroke="#fff" stroke-width="1.15"/>
<text x="292.3" y="427.0" font-size="15.6" text-anchor="middle" fill="#FFCC00" stroke="#FFCC00" stroke-width="0.22" textLength="31" lengthAdjust="spacingAndGlyphs">0.70</text>
<line x1="253.90" y1="371.80" x2="241.10" y2="371.80" stroke="#fff" stroke-width="3.2"/>
<line x1="260.59" y1="338.16" x2="248.77" y2="333.26" stroke="#fff" stroke-width="1.15"/>
<text x="271.8" y="377.5" font-size="15.6" text-anchor="middle" fill="#FFCC00" stroke="#FFCC00" stroke-width="0.22" textLength="31" lengthAdjust="spacingAndGlyphs">0.80</text>
<line x1="279.65" y1="309.65" x2="270.59" y2="300.59" stroke="#fff" stroke-width="3.2"/>
<line x1="308.16" y1="290.59" x2="303.26" y2="278.77" stroke="#fff" stroke-width="1.15"/>
<text x="292.3" y="328.0" font-size="15.6" text-anchor="middle" fill="#FFCC00" stroke="#FFCC00" stroke-width="0.22" textLength="31" lengthAdjust="spacingAndGlyphs">0.90</text>
<line x1="341.80" y1="283.90" x2="341.80" y2="271.10" stroke="#fff" stroke-width="3.2"/>
<line x1="375.44" y1="290.59" x2="380.34" y2="278.77" stroke="#fff" stroke-width="1.15"/>
<text x="341.8" y="307.5" font-size="15.6" text-anchor="middle" fill="#FFCC00" stroke="#FFCC00" stroke-width="0.22" textLength="31" lengthAdjust="spacingAndGlyphs">1.00</text>
<line x1="403.95" y1="309.65" x2="413.01" y2="300.59" stroke="#fff" stroke-width="3.2"/>
<line x1="423.01" y1="338.16" x2="434.83" y2="333.26" stroke="#fff" stroke-width="1.15"/>
<text x="391.3" y="328.0" font-size="15.6" text-anchor="middle" fill="#FFCC00" stroke="#FFCC00" stroke-width="0.22" textLength="31" lengthAdjust="spacingAndGlyphs">1.10</text>
<line x1="429.70" y1="371.80" x2="442.50" y2="371.80" stroke="#fff" stroke-width="3.2"/>
<line x1="423.01" y1="405.44" x2="434.83" y2="410.34" stroke="#fff" stroke-width="1.15"/>
<text x="411.8" y="377.5" font-size="15.6" text-anchor="middle" fill="#FFCC00" stroke="#FFCC00" stroke-width="0.22" textLength="31" lengthAdjust="spacingAndGlyphs">1.20</text>
<line x1="403.95" y1="433.95" x2="413.01" y2="443.01" stroke="#fff" stroke-width="3.2"/>
<text x="391.3" y="427.0" font-size="15.6" text-anchor="middle" fill="#FFCC00" stroke="#FFCC00" stroke-width="0.22" textLength="31" lengthAdjust="spacingAndGlyphs">1.30</text>
<text x="344.3" y="345.3" font-size="30" text-anchor="middle" fill="#FFCC00" stroke="#FFCC00" stroke-width="0.42">λ</text>
<text x="342.0" y="424.8" font-size="15.2" text-anchor="middle" fill="#FFCC00" stroke="#FFCC00" stroke-width="0.21" textLength="46" lengthAdjust="spacingAndGlyphs">lambda</text>
<text x="342.8" y="461.8" font-size="33.5" text-anchor="middle" fill="#FFCC00" stroke="#FFCC00" stroke-width="0.47" textLength="64.5" lengthAdjust="spacingAndGlyphs">1.25</text>
<polygon points="352.50,382.53 434.86,410.54 356.95,371.83" fill="#FFCC00"/>
<circle cx="341.8" cy="371.8" r="15.6" fill="#B3AA6B" stroke="url(#rgo)" stroke-width="1.6"/>
<circle cx="572.9" cy="371.8" r="109.95" fill="none" stroke="url(#rgo)" stroke-width="3.0"/>
<circle cx="572.9" cy="371.8" r="106.9" fill="none" stroke="url(#rgi)" stroke-width="3.2"/>
<path d="M472.20,371.80 A100.7,100.7 0 0 1 480.91,330.84 L492.60,336.05 A87.9,87.9 0 0 0 485.00,371.80 Z" fill="#FFCC00"/>
<path d="M549.22,273.92 A100.7,100.7 0 0 1 596.58,273.92 L593.57,286.36 A87.9,87.9 0 0 0 552.23,286.36 Z" fill="#00FF00"/>
<line x1="510.75" y1="433.95" x2="501.69" y2="443.01" stroke="#fff" stroke-width="3.2"/>
<line x1="491.69" y1="405.44" x2="479.87" y2="410.34" stroke="#fff" stroke-width="1.15"/>
<text x="523.4" y="427.0" font-size="15.6" text-anchor="middle" fill="#FFCC00" stroke="#FFCC00" stroke-width="0.22" textLength="31" lengthAdjust="spacingAndGlyphs">0.70</text>
<line x1="485.00" y1="371.80" x2="472.20" y2="371.80" stroke="#fff" stroke-width="3.2"/>
<line x1="491.69" y1="338.16" x2="479.87" y2="333.26" stroke="#fff" stroke-width="1.15"/>
<text x="502.9" y="377.5" font-size="15.6" text-anchor="middle" fill="#FFCC00" stroke="#FFCC00" stroke-width="0.22" textLength="31" lengthAdjust="spacingAndGlyphs">0.80</text>
<line x1="510.75" y1="309.65" x2="501.69" y2="300.59" stroke="#fff" stroke-width="3.2"/>
<line x1="539.26" y1="290.59" x2="534.36" y2="278.77" stroke="#fff" stroke-width="1.15"/>
<text x="523.4" y="328.0" font-size="15.6" text-anchor="middle" fill="#FFCC00" stroke="#FFCC00" stroke-width="0.22" textLength="31" lengthAdjust="spacingAndGlyphs">0.90</text>
<line x1="572.90" y1="283.90" x2="572.90" y2="271.10" stroke="#fff" stroke-width="3.2"/>
<line x1="606.54" y1="290.59" x2="611.44" y2="278.77" stroke="#fff" stroke-width="1.15"/>
<text x="572.9" y="307.5" font-size="15.6" text-anchor="middle" fill="#FFCC00" stroke="#FFCC00" stroke-width="0.22" textLength="31" lengthAdjust="spacingAndGlyphs">1.00</text>
<line x1="635.05" y1="309.65" x2="644.11" y2="300.59" stroke="#fff" stroke-width="3.2"/>
<line x1="654.11" y1="338.16" x2="665.93" y2="333.26" stroke="#fff" stroke-width="1.15"/>
<text x="622.4" y="328.0" font-size="15.6" text-anchor="middle" fill="#FFCC00" stroke="#FFCC00" stroke-width="0.22" textLength="31" lengthAdjust="spacingAndGlyphs">1.10</text>
<line x1="660.80" y1="371.80" x2="673.60" y2="371.80" stroke="#fff" stroke-width="3.2"/>
<line x1="654.11" y1="405.44" x2="665.93" y2="410.34" stroke="#fff" stroke-width="1.15"/>
<text x="642.9" y="377.5" font-size="15.6" text-anchor="middle" fill="#FFCC00" stroke="#FFCC00" stroke-width="0.22" textLength="31" lengthAdjust="spacingAndGlyphs">1.20</text>
<line x1="635.05" y1="433.95" x2="644.11" y2="443.01" stroke="#fff" stroke-width="3.2"/>
<text x="622.4" y="427.0" font-size="15.6" text-anchor="middle" fill="#FFCC00" stroke="#FFCC00" stroke-width="0.22" textLength="31" lengthAdjust="spacingAndGlyphs">1.30</text>
<text x="572.4" y="461.8" font-size="33.5" text-anchor="middle" fill="#FFCC00" stroke="#FFCC00" stroke-width="0.47" textLength="64.5" lengthAdjust="spacingAndGlyphs">1.00</text>
<circle cx="572.9" cy="371.8" r="15.6" fill="#B3AA6B" stroke="url(#rgo)" stroke-width="1.6"/>
<circle cx="802.5" cy="371.8" r="109.95" fill="none" stroke="url(#rgo)" stroke-width="3.0"/>
<circle cx="802.5" cy="371.8" r="106.9" fill="none" stroke="url(#rgi)" stroke-width="3.2"/>
<line x1="740.35" y1="433.95" x2="731.29" y2="443.01" stroke="#fff" stroke-width="3.2"/>
<line x1="716.29" y1="388.95" x2="703.73" y2="391.45" stroke="#fff" stroke-width="3.2"/>
<line x1="721.29" y1="338.16" x2="709.47" y2="333.26" stroke="#fff" stroke-width="3.2"/>
<line x1="753.67" y1="298.71" x2="746.55" y2="288.07" stroke="#fff" stroke-width="3.2"/>
<line x1="802.50" y1="283.90" x2="802.50" y2="271.10" stroke="#fff" stroke-width="3.2"/>
<line x1="851.33" y1="298.71" x2="858.45" y2="288.07" stroke="#fff" stroke-width="3.2"/>
<line x1="883.71" y1="338.16" x2="895.53" y2="333.26" stroke="#fff" stroke-width="3.2"/>
<line x1="888.71" y1="388.95" x2="901.27" y2="391.45" stroke="#fff" stroke-width="3.2"/>
<line x1="864.65" y1="433.95" x2="873.71" y2="443.01" stroke="#fff" stroke-width="3.2"/>
<circle cx="802.5" cy="371.8" r="15.6" fill="#B3AA6B" stroke="url(#rgo)" stroke-width="1.6"/>
<circle cx="1028.5" cy="371.8" r="109.95" fill="none" stroke="url(#rgo)" stroke-width="3.0"/>
<circle cx="1028.5" cy="371.8" r="106.9" fill="none" stroke="url(#rgi)" stroke-width="3.2"/>
<line x1="966.35" y1="433.95" x2="957.29" y2="443.01" stroke="#fff" stroke-width="3.2"/>
<line x1="950.98" y1="413.24" x2="939.69" y2="419.27" stroke="#fff" stroke-width="1.15"/>
<text x="977.4" y="427.8" font-size="11" text-anchor="middle" fill="#FFCC00" stroke="#FFCC00" stroke-width="0.00">0</text>
<line x1="942.29" y1="388.95" x2="929.73" y2="391.45" stroke="#fff" stroke-width="3.2"/>
<line x1="941.02" y1="363.18" x2="928.28" y2="361.93" stroke="#fff" stroke-width="1.15"/>
<text x="957.6" y="390.8" font-size="11" text-anchor="middle" fill="#FFCC00" stroke="#FFCC00" stroke-width="0.00">10</text>
<line x1="947.29" y1="338.16" x2="935.47" y2="333.26" stroke="#fff" stroke-width="3.2"/>
<line x1="960.55" y1="316.04" x2="950.66" y2="307.92" stroke="#fff" stroke-width="1.15"/>
<text x="961.7" y="349.0" font-size="11" text-anchor="middle" fill="#FFCC00" stroke="#FFCC00" stroke-width="0.00">20</text>
<line x1="979.67" y1="298.71" x2="972.55" y2="288.07" stroke="#fff" stroke-width="3.2"/>
<line x1="1002.98" y1="287.68" x2="999.27" y2="275.44" stroke="#fff" stroke-width="1.15"/>
<text x="988.3" y="316.6" font-size="11" text-anchor="middle" fill="#FFCC00" stroke="#FFCC00" stroke-width="0.00">30</text>
<line x1="1028.50" y1="283.90" x2="1028.50" y2="271.10" stroke="#fff" stroke-width="3.2"/>
<line x1="1054.02" y1="287.68" x2="1057.73" y2="275.44" stroke="#fff" stroke-width="1.15"/>
<text x="1028.5" y="304.4" font-size="11" text-anchor="middle" fill="#FFCC00" stroke="#FFCC00" stroke-width="0.00">40</text>
<line x1="1077.33" y1="298.71" x2="1084.45" y2="288.07" stroke="#fff" stroke-width="3.2"/>
<line x1="1096.45" y1="316.04" x2="1106.34" y2="307.92" stroke="#fff" stroke-width="1.15"/>
<text x="1068.7" y="316.6" font-size="11" text-anchor="middle" fill="#FFCC00" stroke="#FFCC00" stroke-width="0.00">50</text>
<line x1="1109.71" y1="338.16" x2="1121.53" y2="333.26" stroke="#fff" stroke-width="3.2"/>
<line x1="1115.98" y1="363.18" x2="1128.72" y2="361.93" stroke="#fff" stroke-width="1.15"/>
<text x="1095.3" y="349.0" font-size="11" text-anchor="middle" fill="#FFCC00" stroke="#FFCC00" stroke-width="0.00">60</text>
<line x1="1114.71" y1="388.95" x2="1127.27" y2="391.45" stroke="#fff" stroke-width="3.2"/>
<line x1="1106.02" y1="413.24" x2="1117.31" y2="419.27" stroke="#fff" stroke-width="1.15"/>
<text x="1099.4" y="390.8" font-size="11" text-anchor="middle" fill="#FFCC00" stroke="#FFCC00" stroke-width="0.00">70</text>
<line x1="1090.65" y1="433.95" x2="1099.71" y2="443.01" stroke="#fff" stroke-width="3.2"/>
<text x="1079.6" y="427.8" font-size="11" text-anchor="middle" fill="#FFCC00" stroke="#FFCC00" stroke-width="0.00">80</text>
<circle cx="1028.5" cy="371.8" r="15.6" fill="#B3AA6B" stroke="url(#rgo)" stroke-width="1.6"/>
<rect x="1.5" y="489" width="1100" height="62" fill="#000" stroke="#FFCC00" stroke-width="2"/>
<text x="12.4" y="508.3" font-size="15" text-anchor="start" fill="#FFCC00" stroke="#FFCC00" stroke-width="0.21" textLength="91" lengthAdjust="spacingAndGlyphs">lambda target</text>
<text x="12.4" y="527.0" font-size="15" text-anchor="start" fill="#FFCC00" stroke="#FFCC00" stroke-width="0.21" textLength="46.6" lengthAdjust="spacingAndGlyphs">lambda</text>
<text x="12.4" y="545.6" font-size="15" text-anchor="start" fill="#FFCC00" stroke="#FFCC00" stroke-width="0.21" textLength="115.2" lengthAdjust="spacingAndGlyphs">EGO corr. lambda</text>
<rect x="1.6" y="558.3" width="215.2" height="40" rx="7.5" fill="#000" stroke="#FFCC00" stroke-width="2.4"/><rect x="9.9" y="561.2" width="196.1" height="19.7" fill="#00FF00"/><text x="22.0" y="577.9" font-size="19.2" text-anchor="start" fill="#fff" stroke="#fff" stroke-width="0.27" textLength="173.4" lengthAdjust="spacingAndGlyphs">Gamma Enrichment</text>
<rect x="225.2" y="558.3" width="227.20000000000002" height="40" rx="7.5" fill="#000" stroke="#FFCC00" stroke-width="2.4"/><rect x="235" y="561.2" width="29" height="19.7" fill="#00FF00"/><rect x="264" y="561.2" width="179" height="19.7" fill="#666"/><text x="248.5" y="577.9" font-size="19.2" text-anchor="start" fill="#fff" stroke="#fff" stroke-width="0.27" textLength="180.5" lengthAdjust="spacingAndGlyphs">Warmup Enrichment</text>
<rect x="461.2" y="558.3" width="189.1" height="40" rx="7.5" fill="#000" stroke="#FFCC00" stroke-width="2.4"/><rect x="470.5" y="561.2" width="67.29999999999995" height="19.7" fill="#FF0000"/><rect x="537.8" y="561.2" width="16.200000000000045" height="19.7" fill="#FFCC00"/><rect x="554" y="561.2" width="2" height="19.7" fill="#00FF00"/><text x="488.7" y="577.9" font-size="19.2" text-anchor="start" fill="#fff" stroke="#fff" stroke-width="0.27" textLength="134.3" lengthAdjust="spacingAndGlyphs">EGO Correction</text>
<rect x="658.9000000000001" y="558.3" width="178.89999999999995" height="40" rx="7.5" fill="#000" stroke="#FFCC00" stroke-width="2.4"/><rect x="667.8" y="561.2" width="1.7000000000000455" height="19.7" fill="#900000"/><text x="680.0" y="577.9" font-size="19.2" text-anchor="start" fill="#fff" stroke="#fff" stroke-width="0.27" textLength="136" lengthAdjust="spacingAndGlyphs">Idle Duty Cycle</text>
<rect x="845.5" y="558.3" width="190.80000000000004" height="40" rx="7.5" fill="#000" stroke="#FFCC00" stroke-width="2.4"/><rect x="855.4" y="561.2" width="11.200000000000045" height="19.7" fill="#A80000"/><rect x="866.6" y="561.2" width="13.199999999999932" height="19.7" fill="#A88400"/><rect x="879.8" y="561.2" width="59.0" height="19.7" fill="#00A000"/><text x="870.0" y="577.9" font-size="19.2" text-anchor="start" fill="#fff" stroke="#fff" stroke-width="0.27" textLength="142" lengthAdjust="spacingAndGlyphs">Battery Voltage</text>
</svg>
<div class="menu" id="m1" style="left:113.5px;top:142.2px;width:270.3px;height:131px">
<div class="gut" style="left:28.4px"></div>
<div class="mi t" style="top:2.2px;font-weight:bold;font-size:12px;left:34.3px;transform:scaleX(1.0043)">Main overview (hotkey: Shift+1)</div>
<div class="sep" style="top:28px"></div>
<div class="hl" style="top:31.6px"></div>
<div class="mi t" style="top:31.8px;transform:scaleX(0.9829)">Change Gauge Data To</div><div class="arr" style="left:254.2px;top:39.3px"></div>
<div class="mi t" style="top:53.8px;transform:scaleX(1.0008)">Change Gauge Descriptor To</div><div class="arr" style="left:254.2px;top:61.3px"></div>
<div class="mi t" style="top:75.8px;transform:scaleX(1.0414)">Modifiy Descriptor</div>
<div class="sep" style="top:102.2px"></div>
<div class="mi t" style="top:105.8px;transform:scaleX(0.9708)">Themes</div><div class="arr" style="left:254.2px;top:113.3px"></div>
</div>
<div class="menu" id="m2" style="left:378.4px;top:172.8px;width:176.8px;height:158.4px">
<div class="gut" style="left:28.4px"></div>
<div class="hl" style="top:23.5px"></div>
<div class="mi t" style="top:1.2px;left:33.7px;transform:scaleX(0.9519)">ADC</div><div class="arr" style="left:160.3px;top:8.2px"></div><div class="mi t" style="top:23.2px;left:33.7px;transform:scaleX(0.9268)">Basic</div><div class="arr" style="left:160.3px;top:30.2px"></div><div class="mi t" style="top:45.2px;left:33.7px;transform:scaleX(0.9576)">Calc</div><div class="arr" style="left:160.3px;top:52.2px"></div><div class="mi t" style="top:67.2px;left:33.7px;transform:scaleX(0.8547)">GPS</div><div class="arr" style="left:160.3px;top:74.2px"></div><div class="mi t" style="top:89.2px;left:33.7px;transform:scaleX(0.9546)">IAC</div><div class="arr" style="left:160.3px;top:96.2px"></div><div class="mi t" style="top:111.2px;left:33.7px;transform:scaleX(1.0394)">Individual power</div><div class="arr" style="left:160.3px;top:118.2px"></div><div class="mi t" style="top:133.2px;left:33.7px;transform:scaleX(1.0005)">Knock</div><div class="arr" style="left:160.3px;top:140.2px"></div>
</div>
<div class="menu" id="m3" style="left:550.7px;top:194px;width:490.1px;height:385.5px">
<div style="position:absolute;left:180.5px;top:59.4px;width:149px;height:18.6px;background:#3399ff"></div>
<div class="mi3 t" style="left:24.4px;top:0.9px;transform:scaleX(0.9897)">Accel Enrich</div><div class="mi3 t" style="left:24.4px;top:19.9px;transform:scaleX(1.0375)">AfrTarget</div><div class="mi3 t" style="left:24.4px;top:38.9px;transform:scaleX(0.9786)">Air:Fuel Ratio</div><div class="mi3 t" style="left:24.4px;top:57.9px;transform:scaleX(1.0058)">Alien Spark Angle</div><div class="mi3 t" style="left:24.4px;top:76.9px;transform:scaleX(1.0248)">Baro input</div><div class="mi3 t" style="left:24.4px;top:95.9px;transform:scaleX(1.0222)">Barometric Correction</div><div class="mi3 t" style="left:24.4px;top:114.9px;transform:scaleX(1.0053)">Battery Voltage</div><div class="mi3 t" style="left:24.4px;top:133.9px;transform:scaleX(0.9637)">Boost DC</div><div class="mi3 t" style="left:24.4px;top:152.9px;transform:scaleX(1.0050)">Boost DC Alt</div><div class="mi3 t" style="left:24.4px;top:171.9px;transform:scaleX(1.0223)">Boost int</div><div class="mi3 t" style="left:24.4px;top:190.9px;transform:scaleX(1.0137)">Boost Target</div><div class="mi3 t" style="left:24.4px;top:209.9px;transform:scaleX(1.0020)">Camshaft exhaust target</div><div class="mi3 t" style="left:24.4px;top:228.9px;transform:scaleX(1.0256)">Camshaft inlet target</div><div class="mi3 t" style="left:24.4px;top:247.9px;transform:scaleX(1.0091)">Clock</div><div class="mi3 t" style="left:24.4px;top:266.9px;transform:scaleX(1.0513)">consumption (l/100km)</div><div class="mi3 t" style="left:24.4px;top:285.9px;transform:scaleX(1.0763)">consumption (l/h)</div><div class="mi3 t" style="left:24.4px;top:304.9px;transform:scaleX(1.0299)">Coolant</div><div class="mi3 t" style="left:24.4px;top:323.9px;transform:scaleX(1.0063)">dTPS/dt</div><div class="mi3 t" style="left:24.4px;top:342.9px;transform:scaleX(1.0015)">Duty Cycle</div><div class="mi3 t" style="left:24.4px;top:361.9px;transform:scaleX(0.9791)">EGO Correction</div><div class="mi3 t" style="left:199.7px;top:0.9px;transform:scaleX(0.9851)">Engine MAP</div><div class="mi3 t" style="left:199.7px;top:19.9px;transform:scaleX(0.9749)">Engine MAP Rel</div><div class="mi3 t" style="left:199.7px;top:38.9px;transform:scaleX(0.9532)">Engine Speed</div><div class="mi3 t hl3" style="left:199.7px;top:57.9px;transform:scaleX(0.9080)">Exhaust 1</div><div class="mi3 t" style="left:199.7px;top:76.9px;transform:scaleX(0.9272)">Exhaust 2</div><div class="mi3 t" style="left:199.7px;top:95.9px;transform:scaleX(0.9434)">Exhaust Gas Oxygen</div><div class="mi3 t" style="left:199.7px;top:114.9px;transform:scaleX(0.9366)">Exhaust Pressure</div><div class="mi3 t" style="left:199.7px;top:133.9px;transform:scaleX(0.9386)">Fuel Pressure</div><div class="mi3 t" style="left:199.7px;top:152.9px;transform:scaleX(1.0152)">Gamma Enrichment</div><div class="mi3 t" style="left:199.7px;top:171.9px;transform:scaleX(0.9159)">Gear</div><div class="mi3 t" style="left:199.7px;top:190.9px;transform:scaleX(1.0458)">Ignition Dwell</div><div class="mi3 t" style="left:199.7px;top:209.9px;transform:scaleX(0.9765)">Kpa-TPS blend</div><div class="mi3 t" style="left:199.7px;top:228.9px;transform:scaleX(1.0302)">lambda</div><div class="mi3 t" style="left:199.7px;top:247.9px;transform:scaleX(1.0312)">lambda target</div><div class="mi3 t" style="left:199.7px;top:266.9px;transform:scaleX(1.0735)">Manifold Air Temp</div><div class="mi3 t" style="left:199.7px;top:285.9px;transform:scaleX(1.0087)">Pulse width</div><div class="mi3 t" style="left:199.7px;top:304.9px;transform:scaleX(0.9433)">Road Speed</div><div class="mi3 t" style="left:199.7px;top:323.9px;transform:scaleX(0.9932)">Spark Angle</div><div class="mi3 t" style="left:199.7px;top:342.9px;transform:scaleX(0.9794)">Spark Cut</div><div class="mi3 t" style="left:199.7px;top:361.9px;transform:scaleX(0.9428)">Stall O2</div><div class="mi3 t" style="left:352.7px;top:0.9px;transform:scaleX(1.0290)">Throttle Position</div><div class="mi3 t" style="left:352.7px;top:19.9px;transform:scaleX(0.9600)">VE Current</div><div class="mi3 t" style="left:352.7px;top:38.9px;transform:scaleX(0.8837)">VE Correction</div><div class="mi3 t" style="left:352.7px;top:57.9px;transform:scaleX(0.9871)">VVT Target</div><div class="mi3 t" style="left:352.7px;top:76.9px;transform:scaleX(1.0293)">Warmup Enrichment</div>
<svg style="position:absolute;left:180px;top:40px" width="20" height="20" viewBox="0 0 20 20"><path d="M5.8,8.8 L8.1,11.5 L12.2,5.9" stroke="#000" stroke-width="1.9" fill="none"/></svg>
</div>
<svg width="1082" height="585" style="position:absolute;left:0;top:0;pointer-events:none" font-family='"Liberation Sans",sans-serif'>
<defs><filter id="glow" x="-10%" y="-40%" width="120%" height="180%" filterUnits="objectBoundingBox">
<feMorphology in="SourceAlpha" operator="dilate" radius="3" result="d"/>
<feGaussianBlur in="d" stdDeviation="6" result="b"/>
<feFlood flood-color="#fff"/><feComposite in2="b" operator="in" result="g"/>
<feComponentTransfer in="g" result="g2"><feFuncA type="linear" slope="1.18"/></feComponentTransfer>
<feMerge><feMergeNode in="g2"/><feMergeNode in="SourceGraphic"/></feMerge>
</filter></defs>
<ellipse cx="472" cy="250.3" rx="111" ry="101.8" fill="none" stroke="#f60808" stroke-width="2.15"/>
<ellipse cx="784.2" cy="242.7" rx="58.2" ry="17.3" fill="none" stroke="#f60808" stroke-width="2.05"/>
<g filter="url(#glow)" fill="#f20d0d" stroke="#f20d0d" stroke-width="1.0" stroke-linejoin="round" font-size="22.3">
<text x="406" y="140.2" textLength="132.5" lengthAdjust="spacingAndGlyphs">Symbol groups</text>
<text x="849.5" y="248.6" textLength="100.8" lengthAdjust="spacingAndGlyphs">Symbol title</text>
</g>
</svg>
</body></html>
